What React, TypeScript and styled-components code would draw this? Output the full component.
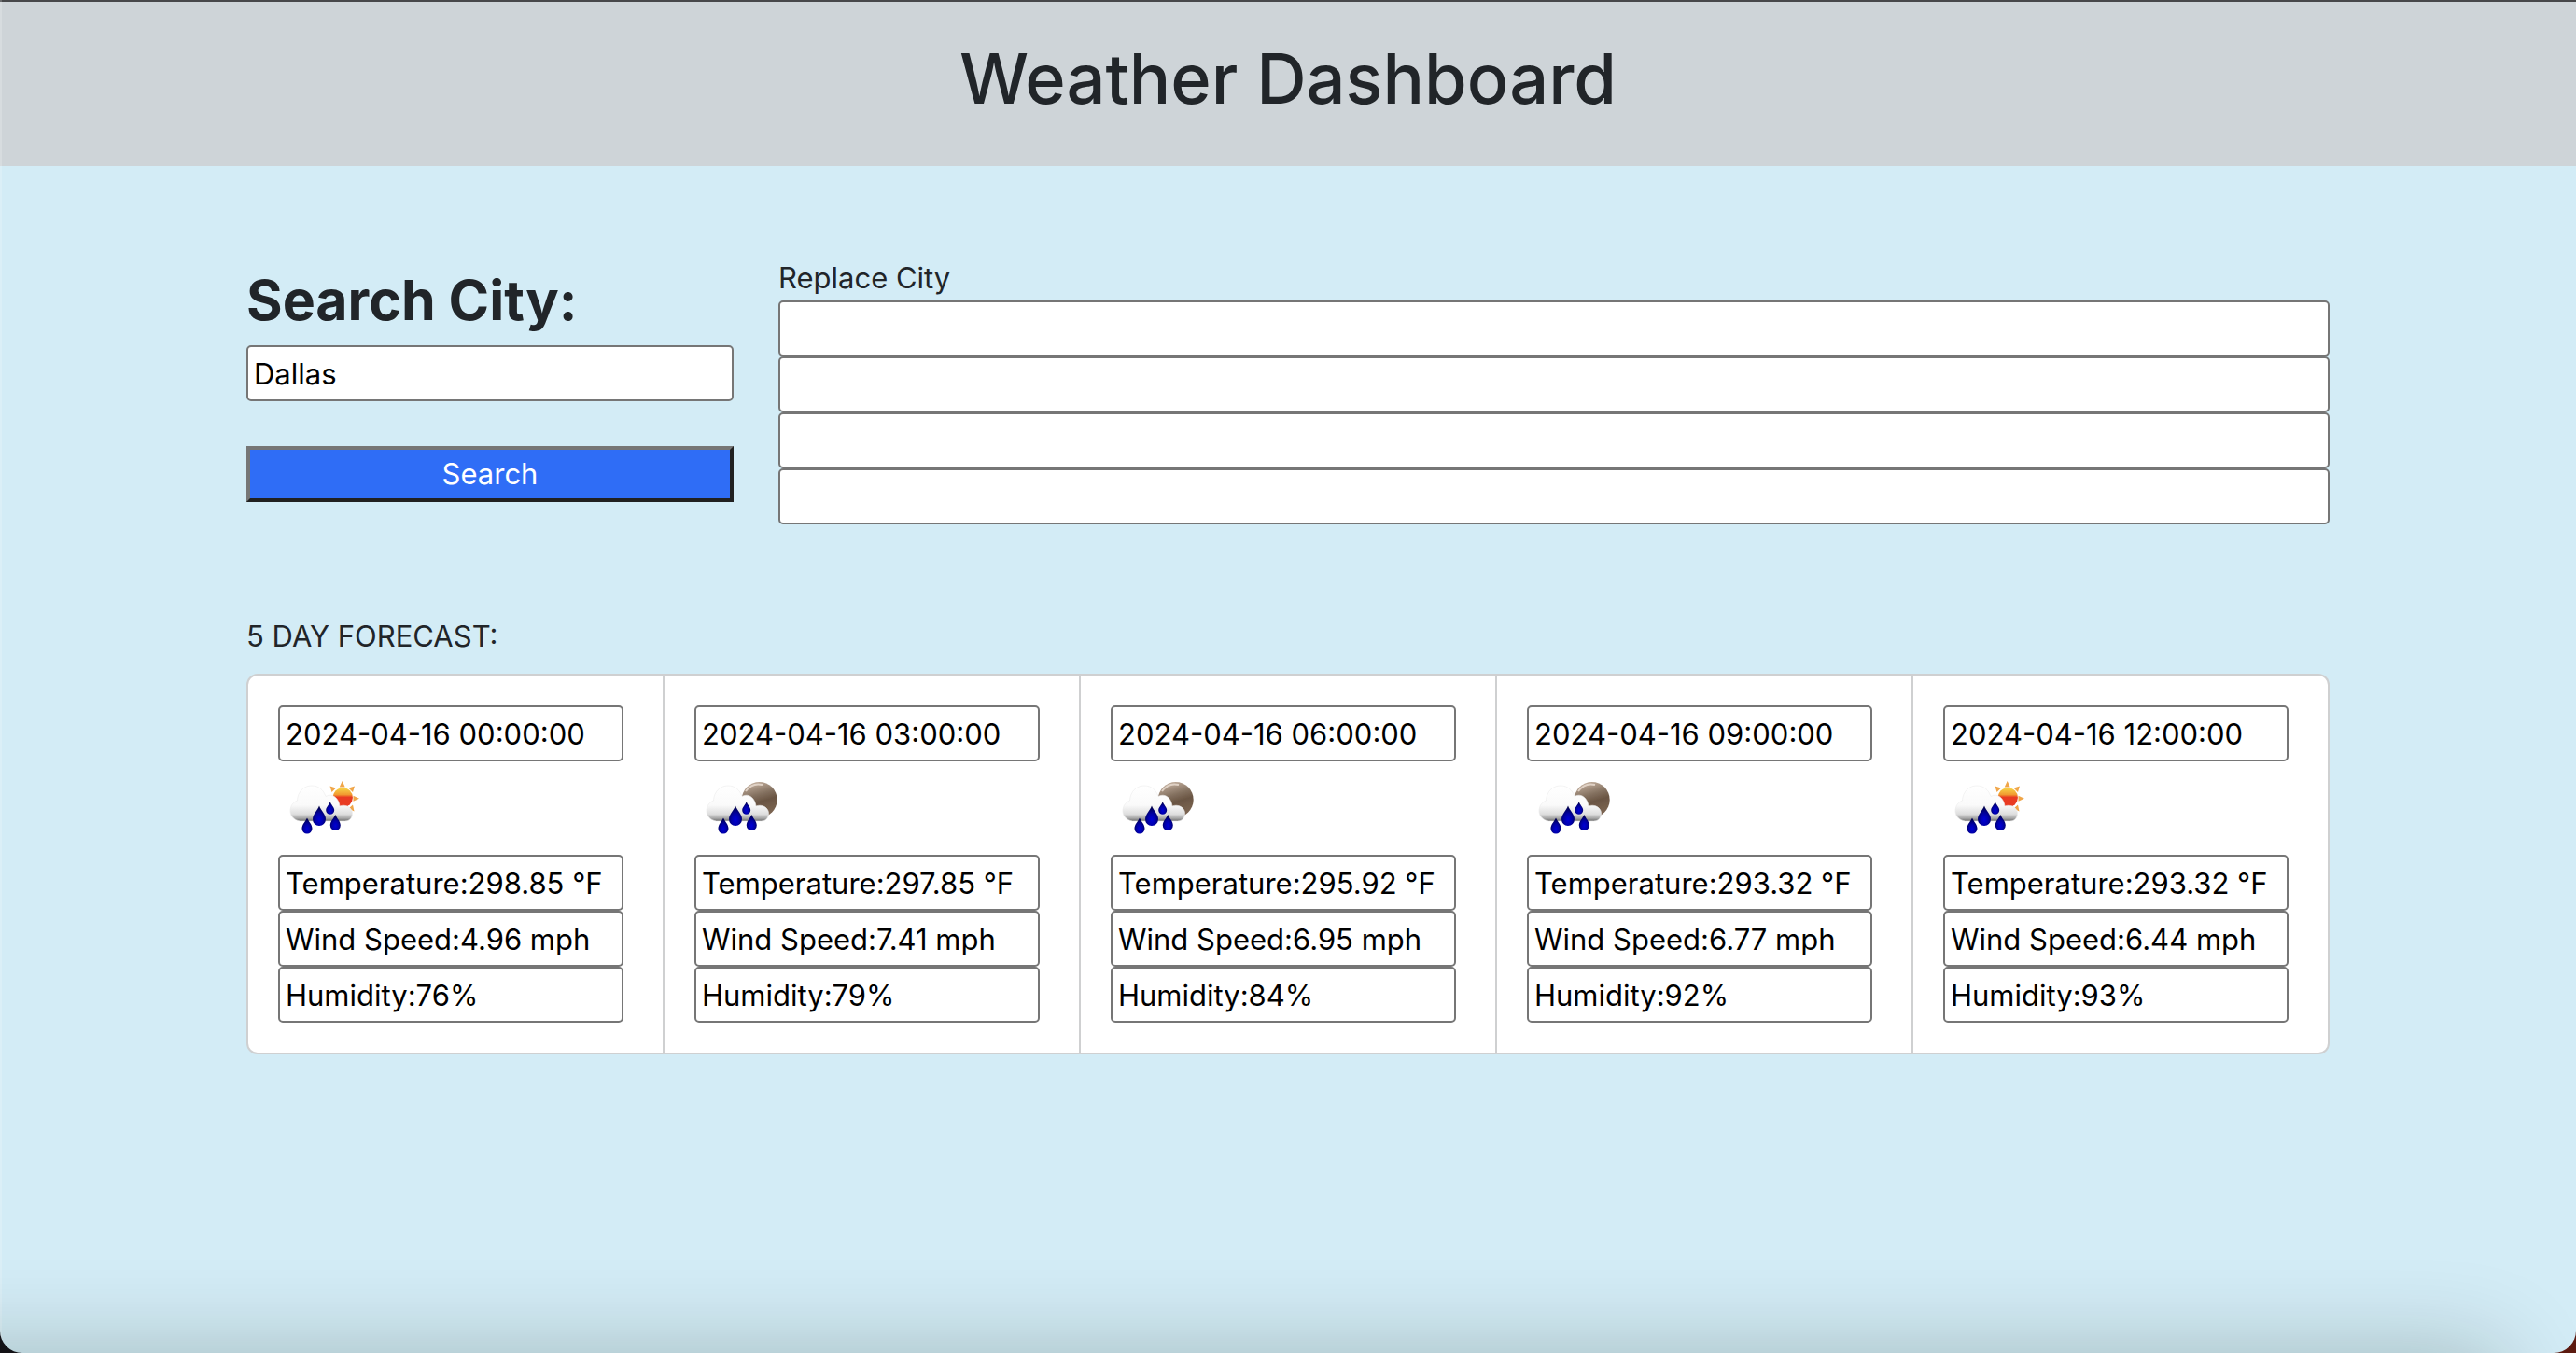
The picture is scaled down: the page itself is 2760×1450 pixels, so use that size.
import React, { useId, useState } from "react";
import styled, { createGlobalStyle } from "styled-components";

const sans = `Inter, "Liberation Sans", sans-serif`;

const GlobalStyle = createGlobalStyle`
  *, *::before, *::after { box-sizing: border-box; }
  body {
    margin: 0;
    color: #212529;
    background: linear-gradient(90deg, #131216 50%, #5c1a10 50%);
    font-family: ${sans};
    font-size: 31px;
    line-height: 48px;
  }
`;

const Page = styled.div`
  position: relative;
  min-height: 100vh;
  overflow: hidden;
  background: #d3ecf6;
  border-radius: 0 0 24px 24px;

  &::before {
    content: "";
    position: absolute;
    inset: 0 auto 0 0;
    width: 2px;
    background: rgba(255, 255, 255, 0.2);
  }

  &::after {
    content: "";
    position: absolute;
    top: 100%;
    left: -160px;
    right: 80px;
    height: 160px;
    box-shadow: 0 0 100px rgba(0, 20, 10, 0.24);
    pointer-events: none;
  }
`;

const Header = styled.header`
  padding: 34px 24px 46px;
  border-top: 2px solid #47484a;
  background: #ced4d8;
  text-align: center;
`;

const Title = styled.h1`
  margin: 0;
  font-size: 74px;
  font-weight: 500;
  line-height: 96px;
`;

const Container = styled.main`
  max-width: 2280px;
  margin: 0 auto;
  padding: 96px 24px;
`;

const SearchRow = styled.section`
  display: grid;
  grid-template-columns: minmax(0, 522fr) minmax(0, 1662fr);
  column-gap: 48px;
  margin-bottom: 96px;
`;

const SearchForm = styled.form`
  display: flex;
  flex-direction: column;
`;

const SearchHeading = styled.h2`
  margin: 0;
  font-size: 59px;
  font-weight: 700;
  line-height: 96px;
`;

const Field = styled.input`
  display: block;
  width: 100%;
  height: 60px;
  padding: 2px 6px;
  border: 2px solid #767676;
  border-radius: 5px;
  background: #fff;
  color: #000;
  font: inherit;
`;

const SearchButton = styled.button`
  height: 60px;
  margin-top: 48px;
  padding: 0 12px;
  border: 4px solid;
  border-color: #767676 #212121 #212121 #767676;
  background: #2f6df6;
  color: #fff;
  font: inherit;
  line-height: 48px;
`;

const History = styled.div`
  display: flex;
  flex-direction: column;
`;

const ForecastLabel = styled.h3`
  margin: 0 0 16px;
  font-size: inherit;
  font-weight: 400;
`;

const CardGroup = styled.div`
  display: flex;
`;

const Card = styled.article`
  flex: 1 0 0%;
  min-width: 0;
  padding: 32px;
  border: 2px solid #cfd0d1;
  background: #fff;

  & + & { border-left: 0; }
  &:first-child { border-radius: 12px 0 0 12px; }
  &:last-child { border-radius: 0 12px 12px 0; }
`;

const CardFields = styled.div`
  max-width: 370px;
`;

const WeatherIcon = styled.svg`
  display: block;
  width: 100px;
  height: 100px;
`;

type Sky = "day" | "night";

const drops = [
  "M31 60.5C33 65 36.5 67.500 36.500 72A5.500 5.500 0 0 1 25.500 72C25.500 67.500 29 65 31 60.500Z",
  "M44 47.500C46 53 51 56.500 51 62A7 7 0 0 1 37 62C37 56.500 42 53 44 47.500Z",
  "M55.700 43C57 47 60.200 49 60.200 52.200A4.500 4.500 0 0 1 51.200 52.200C51.200 49 54.500 47 55.700 43Z",
  "M61.300 57C63 61.500 66.800 64 66.800 68.500A5.500 5.500 0 0 1 55.800 68.500C55.800 64 59.500 61.500 61.300 57Z",
];

function RainIcon({ sky }: { sky: Sky }) {
  const id = useId();
  const ref = (name: string) => `url(#${name}${id})`;
  return (
    <WeatherIcon viewBox="0 0 100 100" role="img" aria-label={`Rain, ${sky}`}>
      <defs>
        <linearGradient id={`sun${id}`} x1="0" y1="0" x2="0" y2="1">
          <stop offset="0.05" stopColor="#f6cf45" />
          <stop offset="0.35" stopColor="#f19a30" />
          <stop offset="0.48" stopColor="#e93a22" />
        </linearGradient>
        <linearGradient id={`moon${id}`} x1="0.2" y1="0" x2="0.5" y2="1">
          <stop offset="0" stopColor="#c9b5a4" />
          <stop offset="0.4" stopColor="#83705f" />
          <stop offset="0.6" stopColor="#6a5543" />
          <stop offset="1" stopColor="#7d6653" />
        </linearGradient>
        <linearGradient id={`cloud${id}`} gradientUnits="userSpaceOnUse" x1="0" y1="26" x2="0" y2="64">
          <stop offset="0" stopColor="#ffffff" />
          <stop offset="0.55" stopColor="#fafafa" />
          <stop offset="0.8" stopColor="#dedede" />
          <stop offset="0.92" stopColor="#a8a8a8" />
          <stop offset="1" stopColor="#6c6c6c" />
        </linearGradient>
        <radialGradient id={`drop${id}`} cx="0.5" cy="0.7" r="0.6">
          <stop offset="0" stopColor="#0505d6" />
          <stop offset="0.5" stopColor="#0202a8" />
          <stop offset="1" stopColor="#02024f" />
        </radialGradient>
        <filter id={`soft${id}`}>
          <feGaussianBlur stdDeviation="0.5" />
        </filter>
      </defs>
      <g filter={ref("soft")}>
        {sky === "day" ? (
          <>
            <path
              fill="#f0a64a"
              d="M68.700 21L71.700 27.500H65.700ZM55.500 26.500L62 28.500L57.500 33ZM82 26.500L80 33L75.500 28.500ZM87 39.700L80.500 42.700V36.700ZM81.500 53.500L75.500 50.500L80 46.500Z"
            />
            <circle cx="69.300" cy="38.800" r="10.600" fill={ref("sun")} />
          </>
        ) : (
          <>
            <circle cx="69.700" cy="41" r="19" fill={ref("moon")} />
            <path d="M55 32C60 25 67 23.500 73 25" fill="none" stroke="#e0d2c6" strokeWidth="2" />
          </>
        )}
        <path
          fill={ref("cloud")}
          stroke="#ebebeb"
          strokeWidth="0.6"
          d="M23.500 64C17 63 13 58.500 13 53C13 47.500 16.500 43.500 20.500 42C21 32.500 27.500 26 36 26C43.500 26 48.500 30.500 51 37.500C58 33.500 65 39 66 48C72.500 45.500 79.500 49.500 79.500 55.500C79.500 60.500 76.500 64 71.500 64Z"
        />
        {drops.map((d) => (
          <path key={d} d={d} fill={ref("drop")} />
        ))}
      </g>
    </WeatherIcon>
  );
}

interface Forecast {
  time: string;
  sky: Sky;
  temperature: string;
  wind: string;
  humidity: number;
}

const forecasts: Forecast[] = [
  { time: "2024-04-16 00:00:00", sky: "day", temperature: "298.85", wind: "4.96", humidity: 76 },
  { time: "2024-04-16 03:00:00", sky: "night", temperature: "297.85", wind: "7.41", humidity: 79 },
  { time: "2024-04-16 06:00:00", sky: "night", temperature: "295.92", wind: "6.95", humidity: 84 },
  { time: "2024-04-16 09:00:00", sky: "night", temperature: "293.32", wind: "6.77", humidity: 92 },
  { time: "2024-04-16 12:00:00", sky: "day", temperature: "293.32", wind: "6.44", humidity: 93 },
];

function ForecastCard({ time, sky, temperature, wind, humidity }: Forecast) {
  return (
    <Card>
      <CardFields>
        <Field readOnly aria-label="Date and time" value={time} />
        <RainIcon sky={sky} />
        <Field readOnly aria-label="Temperature" value={`Temperature:${temperature} °F`} />
        <Field readOnly aria-label="Wind speed" value={`Wind Speed:${wind} mph`} />
        <Field readOnly aria-label="Humidity" value={`Humidity:${humidity}%`} />
      </CardFields>
    </Card>
  );
}

export default function App() {
  const [city, setCity] = useState("Dallas");
  return (
    <>
      <GlobalStyle />
      <Page>
        <Header>
          <Title>Weather Dashboard</Title>
        </Header>
        <Container>
          <SearchRow>
            <SearchForm onSubmit={(event) => event.preventDefault()}>
              <SearchHeading>
                <label htmlFor="city">Search City:</label>
              </SearchHeading>
              <Field id="city" type="text" value={city} onChange={(event) => setCity(event.target.value)} />
              <SearchButton type="submit">Search</SearchButton>
            </SearchForm>
            <History>
              <label htmlFor="replace-1">Replace City</label>
              {[1, 2, 3, 4].map((slot) => (
                <Field key={slot} id={`replace-${slot}`} type="text" aria-label={slot > 1 ? `Replace City ${slot}` : undefined} />
              ))}
            </History>
          </SearchRow>
          <ForecastLabel>5 DAY FORECAST:</ForecastLabel>
          <CardGroup>
            {forecasts.map((forecast) => (
              <ForecastCard key={forecast.time} {...forecast} />
            ))}
          </CardGroup>
        </Container>
      </Page>
    </>
  );
}
